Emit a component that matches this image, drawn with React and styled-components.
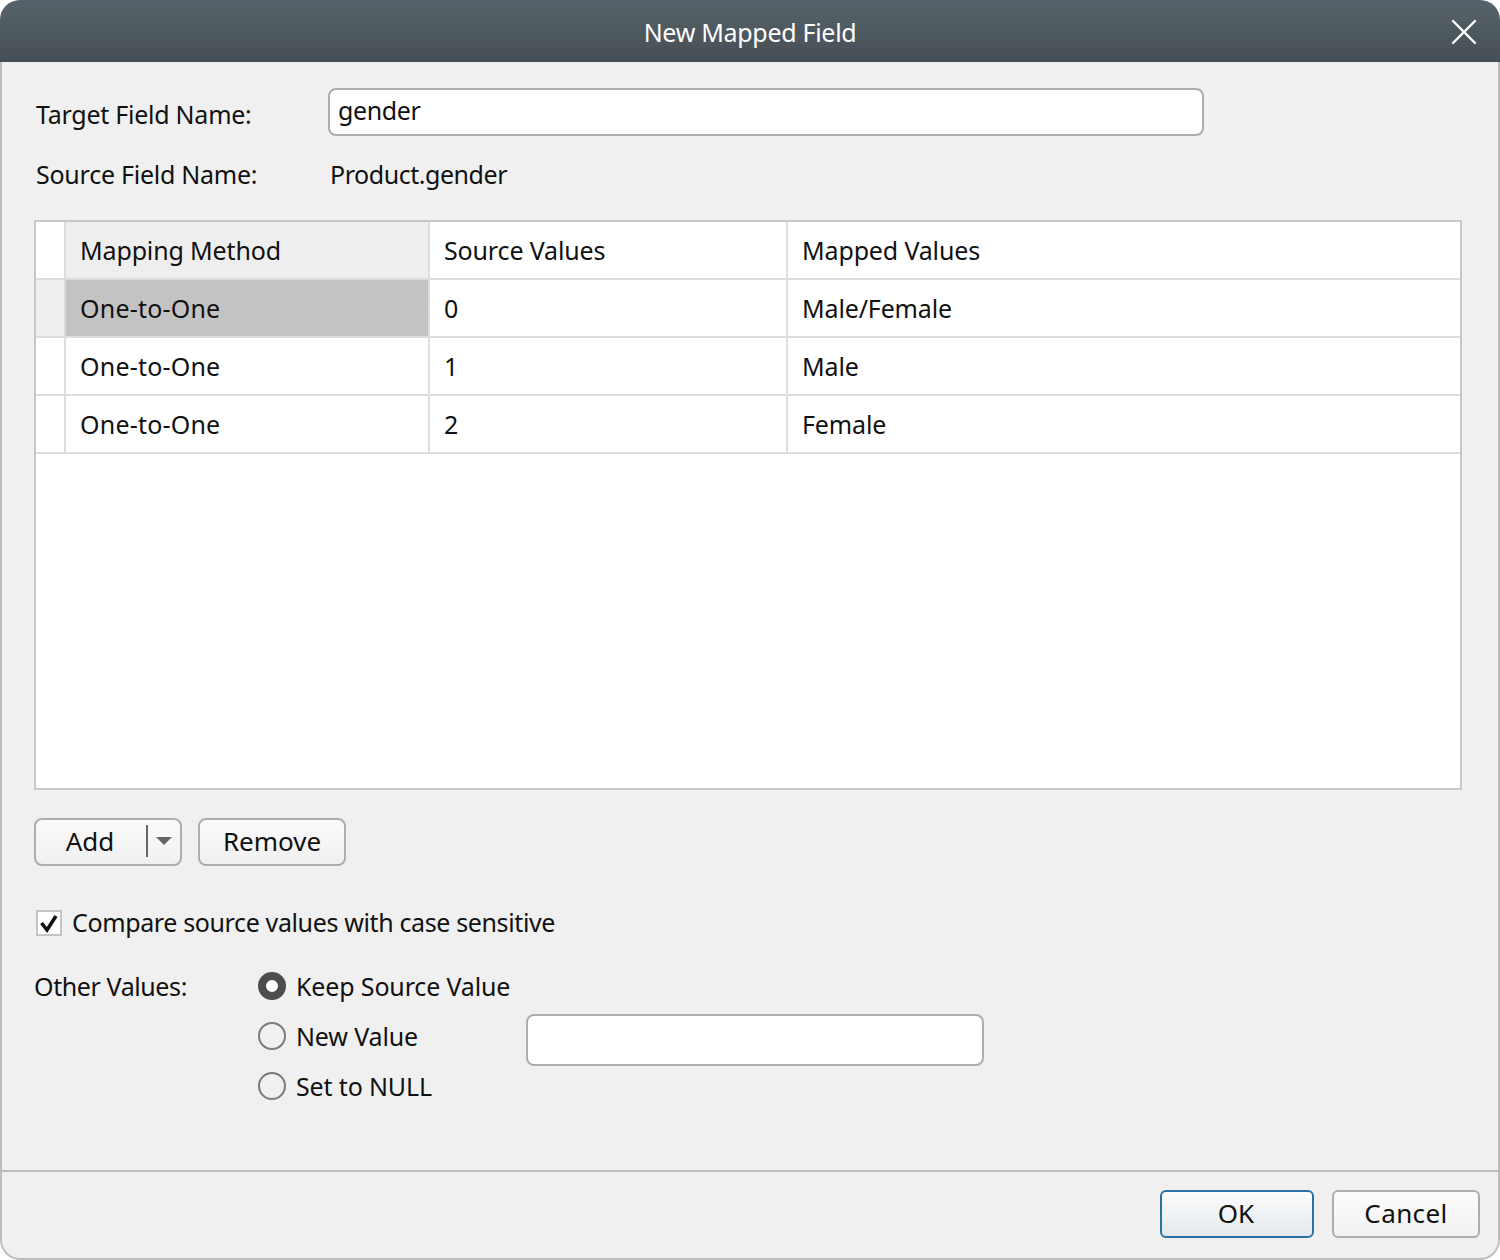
import React from "react";
import styled, { createGlobalStyle } from "styled-components";

const GlobalStyle = createGlobalStyle`
  html, body {
    margin: 0;
    padding: 0;
    background: #ffffff;
  }
  * {
    box-sizing: border-box;
  }
`;

const rows = [
  { method: "One-to-One", source: "0", mapped: "Male/Female", selected: true },
  { method: "One-to-One", source: "1", mapped: "Male" },
  { method: "One-to-One", source: "2", mapped: "Female" },
];

function App() {
  return (
    <>
      <GlobalStyle />
      <Dialog>
        <TitleBar>
          <Title>New Mapped Field</Title>
          <CloseButton aria-label="Close">
            <svg width="26" height="26" viewBox="0 0 26 26">
              <path
                d="M2 2 L24 24 M24 2 L2 24"
                stroke="#ffffff"
                strokeWidth="2.4"
                strokeLinecap="round"
              />
            </svg>
          </CloseButton>
        </TitleBar>

        <Body>
          <FieldRow>
            <FieldLabel $offset={4}>Target Field Name:</FieldLabel>
            <TargetInput defaultValue="gender" />
          </FieldRow>
          <SourceRow>
            <FieldLabel>Source Field Name:</FieldLabel>
            <SourceValue>Product.gender</SourceValue>
          </SourceRow>

          <Table>
            <HeaderRow>
              <Marker />
              <HeaderCell $corner>Mapping Method</HeaderCell>
              <HeaderCell>Source Values</HeaderCell>
              <HeaderCell>Mapped Values</HeaderCell>
            </HeaderRow>
            {rows.map((row) => (
              <DataRow key={row.source}>
                <Marker $selected={row.selected} />
                <MethodCell $selected={row.selected}>{row.method}</MethodCell>
                <Cell>{row.source}</Cell>
                <Cell>{row.mapped}</Cell>
              </DataRow>
            ))}
          </Table>

          <TableActions>
            <ActionButton $split>
              <AddText>Add</AddText>
              <SplitLine />
              <svg width="16" height="8" viewBox="0 0 16 8">
                <path d="M0 0 H16 L8 8 Z" fill="#666666" />
              </svg>
            </ActionButton>
            <ActionButton>Remove</ActionButton>
          </TableActions>

          <CheckRow>
            <CheckBox>
              <svg width="22" height="22" viewBox="0 0 22 22">
                <path
                  d="M3.5 11 L9 18 L18 4"
                  fill="none"
                  stroke="#111111"
                  strokeWidth="3.6"
                />
              </svg>
            </CheckBox>
            <CheckText>Compare source values with case sensitive</CheckText>
          </CheckRow>

          <OtherValues>
            <OtherLabel>Other Values:</OtherLabel>
            <RadioList>
              <RadioRow>
                <Radio $checked />
                <Text>Keep Source Value</Text>
              </RadioRow>
              <RadioRow>
                <Radio />
                <Text>New Value</Text>
                <NewValueInput />
              </RadioRow>
              <RadioRow>
                <Radio />
                <Text>Set to NULL</Text>
              </RadioRow>
            </RadioList>
          </OtherValues>
        </Body>

        <Footer>
          <OkButton>OK</OkButton>
          <CancelButton>Cancel</CancelButton>
        </Footer>
      </Dialog>
    </>
  );
}

export default App;

const font = `"Noto Sans", "Open Sans", "Liberation Sans", sans-serif`;

const Dialog = styled.div`
  display: flex;
  flex-direction: column;
  width: 1500px;
  height: 1260px;
  background: #f0f0f0;
  border-radius: 20px;
  overflow: hidden;
  font-family: ${font};
  font-size: 25px;
  letter-spacing: -0.15px;
  color: #111111;
`;

const TitleBar = styled.header`
  position: relative;
  display: flex;
  align-items: center;
  justify-content: center;
  flex: 0 0 62px;
  padding-top: 2px;
  background: linear-gradient(#566269, #474f56);
`;

const Title = styled.h1`
  margin: 0;
  font-size: 25px;
  font-weight: 400;
  letter-spacing: -0.3px;
  color: #ffffff;
`;

const CloseButton = styled.button`
  position: absolute;
  top: 19px;
  right: 23px;
  display: flex;
  padding: 0;
  border: none;
  background: none;
`;

const Body = styled.main`
  flex: 1;
  display: flex;
  flex-direction: column;
  padding: 26px 36px 0 32px;
  border-left: 2px solid #bdbdbd;
  border-right: 2px solid #bdbdbd;
`;

const FieldRow = styled.div`
  display: grid;
  grid-template-columns: 294px 876px;
  align-items: center;
  height: 48px;
`;

const SourceRow = styled(FieldRow)`
  height: 30px;
  margin: 23px 0 31px;
`;

const FieldLabel = styled.label`
  padding-left: 2px;
  line-height: 30px;
  letter-spacing: -0.25px;
  margin-top: ${(props) => props.$offset || 0}px;
`;

const TargetInput = styled.input`
  width: 876px;
  height: 48px;
  padding: 0 8px 4px;
  border: 2px solid #adadad;
  border-radius: 8px;
  background: #ffffff;
  font: inherit;
  letter-spacing: -0.4px;
  color: inherit;
  outline: none;
`;

const SourceValue = styled.span`
  padding-left: 2px;
  line-height: 30px;
  letter-spacing: -0.45px;
`;

const Table = styled.div`
  flex: 0 0 570px;
  width: 1428px;
  background: #ffffff;
  border: 2px solid #c8c8c8;
`;

const HeaderRow = styled.div`
  display: grid;
  grid-template-columns: 30px 364px 358px 1fr;
  height: 58px;
  border-bottom: 2px solid #dcdcdc;
`;

const DataRow = styled(HeaderRow)``;

const Marker = styled.div`
  border-right: 2px solid #dcdcdc;
  background: ${(props) => (props.$selected ? "#eeeeee" : "#ffffff")};
`;

const Cell = styled.div`
  display: flex;
  align-items: center;
  padding-left: 14px;
  border-right: 2px solid #dcdcdc;
  background: ${(props) => (props.$selected ? "#c3c3c3" : "#ffffff")};

  &:last-child {
    border-right: none;
  }
`;

const MethodCell = styled(Cell)`
  letter-spacing: 0.2px;
`;

const HeaderCell = styled(Cell)`
  background: ${(props) => (props.$corner ? "#eeeeee" : "#ffffff")};
`;

const TableActions = styled.div`
  display: flex;
  gap: 16px;
  margin-top: 28px;
`;

const ActionButton = styled.button`
  display: flex;
  align-items: center;
  justify-content: ${(props) => (props.$split ? "flex-start" : "center")};
  width: 148px;
  height: 48px;
  padding: 0 0 2px;
  border: 2px solid #adadad;
  border-radius: 8px;
  background: linear-gradient(#fbfbfb, #f0f0f0);
  font: inherit;
  font-size: 26px;
  letter-spacing: 0;
  color: inherit;
`;

const AddText = styled.span`
  width: 108px;
  text-align: center;
`;

const SplitLine = styled.span`
  width: 2px;
  height: 32px;
  margin: 0 8px 0 2px;
  background: #666666;
`;

const CheckRow = styled.div`
  display: flex;
  align-items: center;
  gap: 10px;
  height: 30px;
  margin: 41px 0 0 2px;
`;

const CheckBox = styled.span`
  display: flex;
  align-items: center;
  justify-content: center;
  width: 26px;
  height: 26px;
  margin-top: 2px;
  border: 2px solid #c4c4c4;
  background: #ffffff;
`;

const Text = styled.span`
  line-height: 30px;
  white-space: nowrap;
`;

const CheckText = styled(Text)`
  letter-spacing: -0.37px;
`;

const OtherValues = styled.div`
  display: grid;
  grid-template-columns: 224px 1fr;
  margin-top: 34px;
`;

const OtherLabel = styled.div`
  line-height: 30px;
  letter-spacing: -0.4px;
`;

const RadioList = styled.div`
  display: flex;
  flex-direction: column;
  gap: 20px;
`;

const RadioRow = styled.label`
  position: relative;
  display: flex;
  align-items: center;
  gap: 10px;
  height: 30px;
`;

const Radio = styled.span`
  flex: none;
  width: 28px;
  height: 28px;
  border-radius: 50%;
  background: ${(props) => (props.$checked ? "#ffffff" : "transparent")};
  border: ${(props) =>
    props.$checked ? "8px solid #4d4d4d" : "2px solid #7b7b7b"};
`;

const NewValueInput = styled.input`
  position: absolute;
  left: 268px;
  top: -7px;
  width: 458px;
  height: 52px;
  border: 2px solid #adadad;
  border-radius: 8px;
  background: #ffffff;
  outline: none;
`;

const Footer = styled.footer`
  display: flex;
  justify-content: flex-end;
  gap: 18px;
  flex: 0 0 90px;
  padding: 18px 18px 0 0;
  border: 2px solid #bdbdbd;
  border-radius: 0 0 20px 20px;
`;

const DialogButton = styled.button`
  height: 48px;
  padding: 0 0 2px;
  border-radius: 6px;
  font: inherit;
  font-size: 26px;
  letter-spacing: 0;
  color: inherit;
`;

const OkButton = styled(DialogButton)`
  width: 154px;
  padding-right: 2px;
  border: 2px solid #2a72a5;
  background: linear-gradient(#fbfcfc, #e3e9ed);
`;

const CancelButton = styled(DialogButton)`
  width: 148px;
  letter-spacing: 0.4px;
  border: 2px solid #adadad;
  background: linear-gradient(#fdfdfd, #f1f1f1);
`;
